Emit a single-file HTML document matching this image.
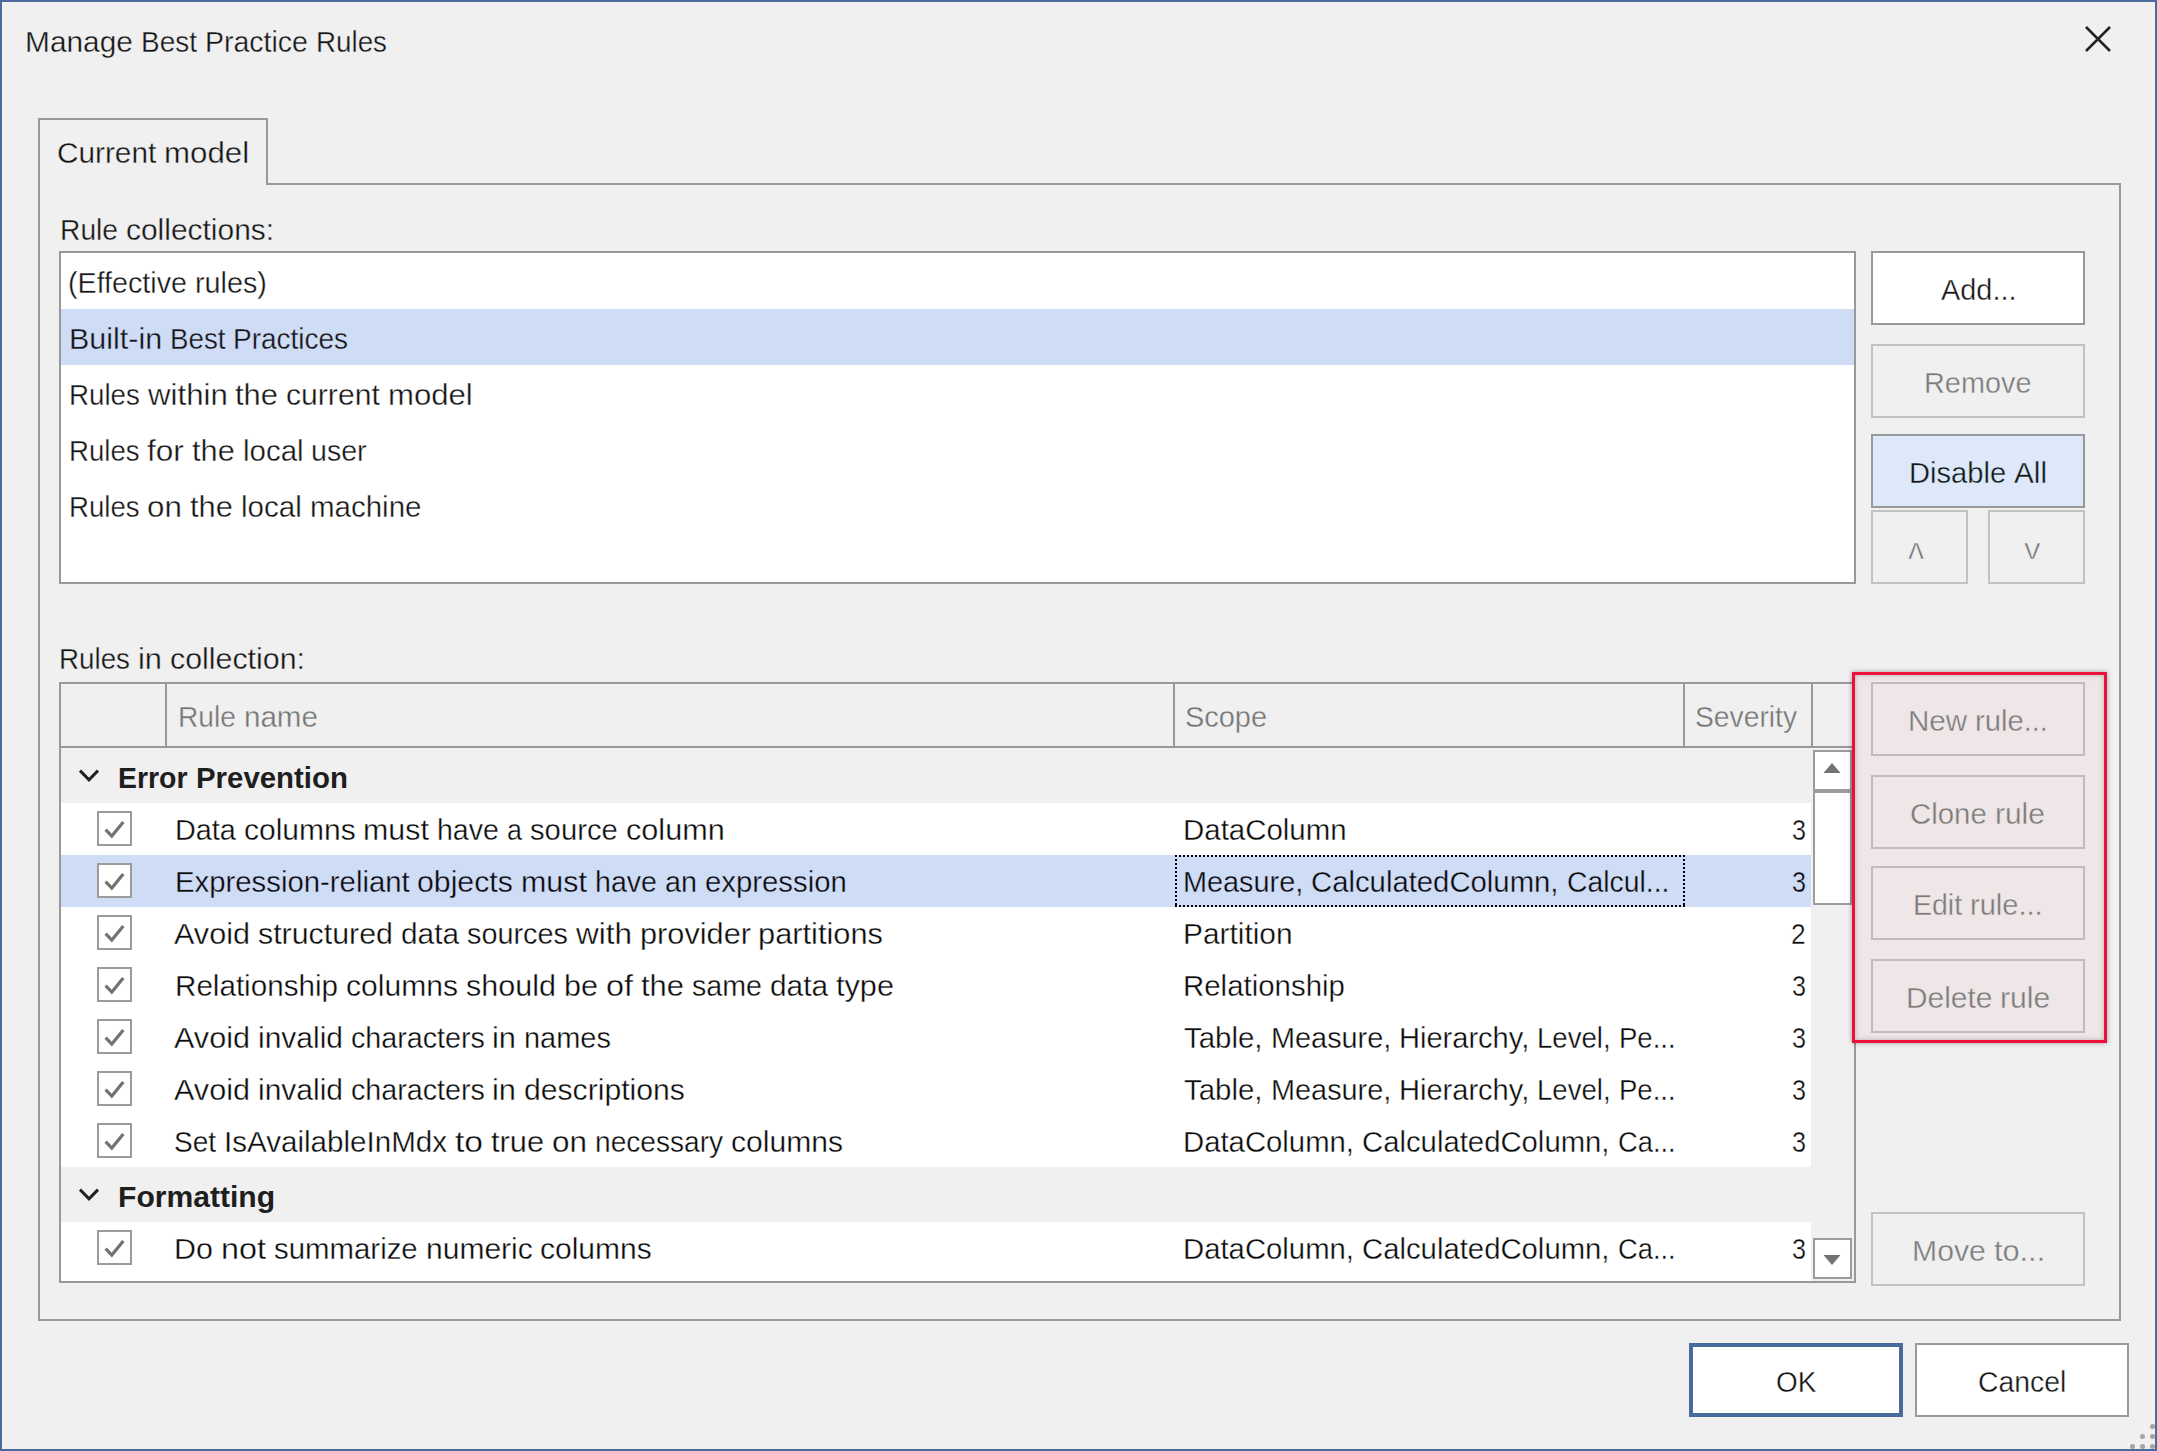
<!DOCTYPE html>
<html><head><meta charset="utf-8"><title>Manage Best Practice Rules</title>
<style>
html,body{margin:0;padding:0}
body{width:2157px;height:1451px;background:#f0f0f0;position:relative;overflow:hidden;font-family:"Liberation Sans",sans-serif;font-size:30px;line-height:36px}
.b{position:absolute;box-sizing:content-box}
.t{position:absolute;white-space:nowrap;height:36px}
.t span{position:absolute;top:0;transform-origin:0 0;white-space:pre}
.cb{width:31px;height:31px;border:2px solid #9b9b9b;background:#fff}
.cb svg{display:block}
#win{position:absolute;left:0;top:0;width:2153px;height:1447px;border:2px solid #4a6a9e;pointer-events:none}
</style></head>
<body>
<!-- tab control -->
<div class="b" style="left:38px;top:183px;width:2079px;height:1134px;border:2px solid #999"></div>
<div class="b" style="left:38px;top:118px;width:226px;height:65px;border:2px solid #999;border-bottom:none;background:#f0f0f0"></div>
<!-- rule collections listbox -->
<div class="b" style="left:59px;top:251px;width:1793px;height:329px;border:2px solid #999;background:#fff"></div>
<div class="b" style="left:61px;top:309px;width:1793px;height:56px;background:#cfdcf5"></div>
<!-- collection buttons -->
<div class="b" style="left:1871px;top:251px;width:210px;height:70px;border:2px solid #999;background:#fff"></div>
<div class="b" style="left:1871px;top:344px;width:210px;height:70px;border:2px solid #c2c2c2;background:#f0f0f0"></div>
<div class="b" style="left:1871px;top:434px;width:210px;height:70px;border:2px solid #999;background:#dde9fb"></div>
<div class="b" style="left:1871px;top:510px;width:93px;height:70px;border:2px solid #c2c2c2;background:#f0f0f0"></div>
<div class="b" style="left:1988px;top:510px;width:93px;height:70px;border:2px solid #c2c2c2;background:#f0f0f0"></div>
<!-- rules table -->
<div class="b" style="left:59px;top:682px;width:1793px;height:597px;border:2px solid #999;background:#f0f0f0"></div>
<div class="b" style="left:61px;top:746px;width:1793px;height:2px;background:#999"></div>
<div class="b" style="left:165px;top:684px;width:2px;height:62px;background:#999"></div>
<div class="b" style="left:1173px;top:684px;width:2px;height:62px;background:#999"></div>
<div class="b" style="left:1683px;top:684px;width:2px;height:62px;background:#999"></div>
<div class="b" style="left:1811px;top:684px;width:2px;height:62px;background:#999"></div>
<div class="b" style="left:61px;top:803px;width:1750px;height:52px;background:#fff"></div>
<div class="b" style="left:61px;top:855px;width:1750px;height:52px;background:#cfdcf5"></div>
<div class="b" style="left:61px;top:907px;width:1750px;height:52px;background:#fff"></div>
<div class="b" style="left:61px;top:959px;width:1750px;height:52px;background:#fff"></div>
<div class="b" style="left:61px;top:1011px;width:1750px;height:52px;background:#fff"></div>
<div class="b" style="left:61px;top:1063px;width:1750px;height:52px;background:#fff"></div>
<div class="b" style="left:61px;top:1115px;width:1750px;height:52px;background:#fff"></div>
<div class="b" style="left:61px;top:1222px;width:1750px;height:59px;background:#fff"></div>
<div class="b" style="left:1175px;top:855px;width:510px;height:2px;background:repeating-linear-gradient(90deg,#000 0 2px,transparent 2px 4px)"></div>
<div class="b" style="left:1175px;top:905px;width:510px;height:2px;background:repeating-linear-gradient(90deg,#000 0 2px,transparent 2px 4px)"></div>
<div class="b" style="left:1175px;top:855px;width:2px;height:52px;background:repeating-linear-gradient(180deg,#000 0 2px,transparent 2px 4px)"></div>
<div class="b" style="left:1683px;top:855px;width:2px;height:52px;background:repeating-linear-gradient(180deg,#000 0 2px,transparent 2px 4px)"></div>
<div class="b cb" style="left:97px;top:811px"><svg width="31" height="31" viewBox="0 0 31 31"><path d="M6.6 16.7 L12.8 23.1 L24.3 9.1" fill="none" stroke="#737373" stroke-width="3.2"/></svg></div>
<div class="b cb" style="left:97px;top:863px"><svg width="31" height="31" viewBox="0 0 31 31"><path d="M6.6 16.7 L12.8 23.1 L24.3 9.1" fill="none" stroke="#737373" stroke-width="3.2"/></svg></div>
<div class="b cb" style="left:97px;top:915px"><svg width="31" height="31" viewBox="0 0 31 31"><path d="M6.6 16.7 L12.8 23.1 L24.3 9.1" fill="none" stroke="#737373" stroke-width="3.2"/></svg></div>
<div class="b cb" style="left:97px;top:967px"><svg width="31" height="31" viewBox="0 0 31 31"><path d="M6.6 16.7 L12.8 23.1 L24.3 9.1" fill="none" stroke="#737373" stroke-width="3.2"/></svg></div>
<div class="b cb" style="left:97px;top:1019px"><svg width="31" height="31" viewBox="0 0 31 31"><path d="M6.6 16.7 L12.8 23.1 L24.3 9.1" fill="none" stroke="#737373" stroke-width="3.2"/></svg></div>
<div class="b cb" style="left:97px;top:1071px"><svg width="31" height="31" viewBox="0 0 31 31"><path d="M6.6 16.7 L12.8 23.1 L24.3 9.1" fill="none" stroke="#737373" stroke-width="3.2"/></svg></div>
<div class="b cb" style="left:97px;top:1123px"><svg width="31" height="31" viewBox="0 0 31 31"><path d="M6.6 16.7 L12.8 23.1 L24.3 9.1" fill="none" stroke="#737373" stroke-width="3.2"/></svg></div>
<div class="b cb" style="left:97px;top:1230px"><svg width="31" height="31" viewBox="0 0 31 31"><path d="M6.6 16.7 L12.8 23.1 L24.3 9.1" fill="none" stroke="#737373" stroke-width="3.2"/></svg></div>
<svg class="b" style="left:76px;top:766px" width="26" height="20" viewBox="0 0 26 20"><path d="M4 4.6 L13 13.8 L22 4.6" fill="none" stroke="#222" stroke-width="3"/></svg>
<svg class="b" style="left:76px;top:1185px" width="26" height="20" viewBox="0 0 26 20"><path d="M4 4.6 L13 13.8 L22 4.6" fill="none" stroke="#222" stroke-width="3"/></svg>
<!-- scrollbar -->
<div class="b" style="left:1813px;top:750px;width:35px;height:37px;border:2px solid #9c9c9c;background:#fff"></div>
<div class="b" style="left:1813px;top:791px;width:35px;height:110px;border:2px solid #9c9c9c;background:#fff"></div>
<div class="b" style="left:1813px;top:1238px;width:35px;height:37px;border:2px solid #9c9c9c;background:#fff"></div>
<svg class="b" style="left:1822px;top:762px" width="20" height="12" viewBox="0 0 20 12"><path d="M1.5 11 L10 1 L18.5 11 Z" fill="#737373"/></svg>
<svg class="b" style="left:1822px;top:1254px" width="20" height="12" viewBox="0 0 20 12"><path d="M1.5 1 L10 11 L18.5 1 Z" fill="#737373"/></svg>
<!-- highlighted rule buttons -->
<div class="b" style="left:1852px;top:672px;width:249px;height:365px;border:3px solid #ed0f3c;background:#efe6e7;box-shadow:0 0 5px rgba(0,0,0,.35), inset 0 0 5px rgba(60,90,80,.35)"></div>
<div class="b" style="left:1871px;top:682px;width:210px;height:70px;border:2px solid #c4b9bc;background:#efe6e7"></div>
<div class="b" style="left:1871px;top:775px;width:210px;height:70px;border:2px solid #c4b9bc;background:#efe6e7"></div>
<div class="b" style="left:1871px;top:866px;width:210px;height:70px;border:2px solid #c4b9bc;background:#efe6e7"></div>
<div class="b" style="left:1871px;top:959px;width:210px;height:70px;border:2px solid #c4b9bc;background:#efe6e7"></div>
<div class="b" style="left:1871px;top:1212px;width:210px;height:70px;border:2px solid #c2c2c2;background:#f0f0f0"></div>
<!-- dialog buttons -->
<div class="b" style="left:1689px;top:1343px;width:206px;height:66px;border:4px solid #4a6a9e;background:#fff"></div>
<div class="b" style="left:1915px;top:1343px;width:210px;height:70px;border:2px solid #999;background:#fff"></div>
<svg class="b" style="left:2083px;top:24px" width="30" height="30" viewBox="0 0 30 30"><path d="M3 3 L27 27 M27 3 L3 27" fill="none" stroke="#222" stroke-width="2.5"/></svg>
<div class="b" style="left:2150px;top:1424px;width:5px;height:5px;border-radius:50%;background:#a3a3a3"></div>
<div class="b" style="left:2140px;top:1434px;width:5px;height:5px;border-radius:50%;background:#a3a3a3"></div>
<div class="b" style="left:2150px;top:1434px;width:5px;height:5px;border-radius:50%;background:#a3a3a3"></div>
<div class="b" style="left:2130px;top:1444px;width:5px;height:5px;border-radius:50%;background:#a3a3a3"></div>
<div class="b" style="left:2140px;top:1444px;width:5px;height:5px;border-radius:50%;background:#a3a3a3"></div>
<div class="b" style="left:2150px;top:1444px;width:5px;height:5px;border-radius:50%;background:#a3a3a3"></div>
<div class="t" style="left:25.2px;top:24.0px;color:#151515;-webkit-text-stroke:0.35px #f0f0f0"><span style="left:0.0px;transform:scaleX(0.9956)">Manage</span> <span style="left:115.9px;transform:scaleX(0.9323)">Best</span> <span style="left:179.9px;transform:scaleX(0.9499)">Practice</span> <span style="left:290.8px;transform:scaleX(0.9252)">Rules</span></div>
<div class="t" style="left:57.1px;top:135.0px;color:#151515;-webkit-text-stroke:0.35px #f0f0f0"><span style="left:0.0px;transform:scaleX(0.9917)">Current</span> <span style="left:107.2px;transform:scaleX(1.0424)">model</span></div>
<div class="t" style="left:59.5px;top:212.0px;color:#151515;-webkit-text-stroke:0.35px #f0f0f0"><span style="left:0.0px;transform:scaleX(0.9407)">Rule</span> <span style="left:66.0px;transform:scaleX(0.9980)">collections:</span></div>
<div class="t" style="left:67.9px;top:265.0px;color:#151515;-webkit-text-stroke:0.35px #fff"><span style="left:0.0px;transform:scaleX(0.9552)">(Effective</span> <span style="left:126.9px;transform:scaleX(0.9592)">rules)</span></div>
<div class="t" style="left:68.9px;top:321.0px;color:#151515;-webkit-text-stroke:0.35px #cfdcf5"><span style="left:0.0px;transform:scaleX(1.0166)">Built-in</span> <span style="left:101.2px;transform:scaleX(0.9252)">Best</span> <span style="left:164.6px;transform:scaleX(0.9325)">Practices</span></div>
<div class="t" style="left:68.9px;top:377.0px;color:#151515;-webkit-text-stroke:0.35px #fff"><span style="left:0.0px;transform:scaleX(0.9234)">Rules</span> <span style="left:78.8px;transform:scaleX(1.0405)">within</span> <span style="left:166.6px;transform:scaleX(1.0285)">the</span> <span style="left:217.5px;transform:scaleX(1.0043)">current</span> <span style="left:319.2px;transform:scaleX(1.0377)">model</span></div>
<div class="t" style="left:68.9px;top:433.0px;color:#151515;-webkit-text-stroke:0.35px #fff"><span style="left:0.0px;transform:scaleX(0.9198)">Rules</span> <span style="left:78.5px;transform:scaleX(1.0501)">for</span> <span style="left:123.2px;transform:scaleX(1.0245)">the</span> <span style="left:173.9px;transform:scaleX(0.9824)">local</span> <span style="left:242.4px;transform:scaleX(0.9535)">user</span></div>
<div class="t" style="left:68.9px;top:489.0px;color:#151515;-webkit-text-stroke:0.35px #fff"><span style="left:0.0px;transform:scaleX(0.9213)">Rules</span> <span style="left:78.6px;transform:scaleX(1.0439)">on</span> <span style="left:121.4px;transform:scaleX(1.0262)">the</span> <span style="left:172.2px;transform:scaleX(0.9840)">local</span> <span style="left:240.9px;transform:scaleX(0.9830)">machine</span></div>
<div class="t" style="left:59.1px;top:641.0px;color:#151515;-webkit-text-stroke:0.35px #f0f0f0"><span style="left:0.0px;transform:scaleX(0.9255)">Rules</span> <span style="left:79.0px;transform:scaleX(1.0276)">in</span> <span style="left:111.0px;transform:scaleX(1.0118)">collection:</span></div>
<div class="t" style="left:1940.8px;top:272.0px;color:#151515;-webkit-text-stroke:0.35px #fff"><span style="left:0.0px;transform:scaleX(0.9635)">Add...</span></div>
<div class="t" style="left:1924.3px;top:365.0px;color:#7b7b7b;-webkit-text-stroke:0.35px #f0f0f0"><span style="left:0.0px;transform:scaleX(0.9616)">Remove</span></div>
<div class="t" style="left:1908.8px;top:455.0px;color:#151515;-webkit-text-stroke:0.35px #dde9fb"><span style="left:0.0px;transform:scaleX(0.9704)">Disable</span> <span style="left:105.1px;transform:scaleX(0.9907)">All</span></div>
<div class="t" style="left:1907.6px;top:531.4px;color:#777;-webkit-text-stroke:0.7px #f0f0f0"><span style="left:0.0px;transform:scaleX(1.0738)">ʌ</span></div>
<div class="t" style="left:2024.3px;top:531.4px;color:#777;-webkit-text-stroke:0.7px #f0f0f0"><span style="left:0.0px;transform:scaleX(1.1096)">v</span></div>
<div class="t" style="left:177.7px;top:699.0px;color:#757575;-webkit-text-stroke:0.35px #f0f0f0"><span style="left:0.0px;transform:scaleX(0.9390)">Rule</span> <span style="left:65.9px;transform:scaleX(0.9850)">name</span></div>
<div class="t" style="left:1184.5px;top:699.0px;color:#757575;-webkit-text-stroke:0.35px #f0f0f0"><span style="left:0.0px;transform:scaleX(0.9645)">Scope</span></div>
<div class="t" style="left:1694.5px;top:699.0px;color:#757575;-webkit-text-stroke:0.35px #f0f0f0"><span style="left:0.0px;transform:scaleX(0.9418)">Severity</span></div>
<div class="t" style="left:118.2px;top:760.0px;color:#1e1e1e;font-weight:bold"><span style="left:0.0px;transform:scaleX(0.9473)">Error</span> <span style="left:77.4px;transform:scaleX(0.9798)">Prevention</span></div>
<div class="t" style="left:118.2px;top:1179.0px;color:#1e1e1e;font-weight:bold"><span style="left:0.0px;transform:scaleX(1.0028)">Formatting</span></div>
<div class="t" style="left:174.8px;top:812.0px;color:#0a0a0a;-webkit-text-stroke:0.35px #fff"><span style="left:0.0px;transform:scaleX(0.9603)">Data</span> <span style="left:68.8px;transform:scaleX(1.0001)">columns</span> <span style="left:188.5px;transform:scaleX(1.0127)">must</span> <span style="left:262.4px;transform:scaleX(0.9507)">have</span> <span style="left:332.2px;transform:scaleX(0.8968)">a</span> <span style="left:355.1px;transform:scaleX(0.9749)">source</span> <span style="left:450.9px;transform:scaleX(1.0212)">column</span></div>
<div class="t" style="left:1183.2px;top:812.0px;color:#0a0a0a;-webkit-text-stroke:0.35px #fff"><span style="left:0.0px;transform:scaleX(0.9813)">DataColumn</span></div>
<div class="t" style="left:1791.6px;top:812.0px;color:#0a0a0a;-webkit-text-stroke:0.35px #fff"><span style="left:0.0px;transform:scaleX(0.8393)">3</span></div>
<div class="t" style="left:174.8px;top:864.0px;color:#0a0a0a;-webkit-text-stroke:0.35px #cfdcf5"><span style="left:0.0px;transform:scaleX(0.9774)">Expression-reliant</span> <span style="left:242.7px;transform:scaleX(1.0085)">objects</span> <span style="left:346.5px;transform:scaleX(1.0138)">must</span> <span style="left:420.4px;transform:scaleX(0.9517)">have</span> <span style="left:490.3px;transform:scaleX(0.9576)">an</span> <span style="left:530.3px;transform:scaleX(0.9774)">expression</span></div>
<div class="t" style="left:1183.2px;top:864.0px;color:#0a0a0a;-webkit-text-stroke:0.35px #cfdcf5"><span style="left:0.0px;transform:scaleX(0.9617)">Measure,</span> <span style="left:128.2px;transform:scaleX(0.9764)">CalculatedColumn,</span> <span style="left:383.6px;transform:scaleX(0.9447)">Calcul...</span></div>
<div class="t" style="left:1791.6px;top:864.0px;color:#0a0a0a;-webkit-text-stroke:0.35px #cfdcf5"><span style="left:0.0px;transform:scaleX(0.8393)">3</span></div>
<div class="t" style="left:173.7px;top:916.0px;color:#0a0a0a;-webkit-text-stroke:0.35px #fff"><span style="left:0.0px;transform:scaleX(1.0198)">Avoid</span> <span style="left:84.0px;transform:scaleX(1.0118)">structured</span> <span style="left:226.9px;transform:scaleX(0.9931)">data</span> <span style="left:292.9px;transform:scaleX(0.9612)">sources</span> <span style="left:401.9px;transform:scaleX(1.0494)">with</span> <span style="left:465.9px;transform:scaleX(1.0238)">provider</span> <span style="left:584.8px;transform:scaleX(1.0266)">partitions</span></div>
<div class="t" style="left:1183.2px;top:916.0px;color:#0a0a0a;-webkit-text-stroke:0.35px #fff"><span style="left:0.0px;transform:scaleX(0.9959)">Partition</span></div>
<div class="t" style="left:1791.2px;top:916.0px;color:#0a0a0a;-webkit-text-stroke:0.35px #fff"><span style="left:0.0px;transform:scaleX(0.8753)">2</span></div>
<div class="t" style="left:174.9px;top:968.0px;color:#0a0a0a;-webkit-text-stroke:0.35px #fff"><span style="left:0.0px;transform:scaleX(0.9869)">Relationship</span> <span style="left:170.9px;transform:scaleX(1.0022)">columns</span> <span style="left:290.9px;transform:scaleX(1.0177)">should</span> <span style="left:388.9px;transform:scaleX(1.0185)">be</span> <span style="left:430.8px;transform:scaleX(1.0788)">of</span> <span style="left:465.8px;transform:scaleX(1.0307)">the</span> <span style="left:516.8px;transform:scaleX(0.9539)">same</span> <span style="left:594.8px;transform:scaleX(0.9930)">data</span> <span style="left:660.8px;transform:scaleX(1.0225)">type</span></div>
<div class="t" style="left:1183.2px;top:968.0px;color:#0a0a0a;-webkit-text-stroke:0.35px #fff"><span style="left:0.0px;transform:scaleX(0.9809)">Relationship</span></div>
<div class="t" style="left:1791.6px;top:968.0px;color:#0a0a0a;-webkit-text-stroke:0.35px #fff"><span style="left:0.0px;transform:scaleX(0.8393)">3</span></div>
<div class="t" style="left:173.7px;top:1020.0px;color:#0a0a0a;-webkit-text-stroke:0.35px #fff"><span style="left:0.0px;transform:scaleX(1.0196)">Avoid</span> <span style="left:84.0px;transform:scaleX(0.9990)">invalid</span> <span style="left:176.9px;transform:scaleX(0.9563)">characters</span> <span style="left:318.8px;transform:scaleX(1.0274)">in</span> <span style="left:350.8px;transform:scaleX(0.9657)">names</span></div>
<div class="t" style="left:1184.2px;top:1020.0px;color:#0a0a0a;-webkit-text-stroke:0.35px #fff"><span style="left:0.0px;transform:scaleX(0.9809)">Table,</span> <span style="left:86.5px;transform:scaleX(0.9618)">Measure,</span> <span style="left:214.7px;transform:scaleX(0.9683)">Hierarchy,</span> <span style="left:352.9px;transform:scaleX(0.9188)">Level,</span> <span style="left:434.4px;transform:scaleX(0.9183)">Pe...</span></div>
<div class="t" style="left:1791.6px;top:1020.0px;color:#0a0a0a;-webkit-text-stroke:0.35px #fff"><span style="left:0.0px;transform:scaleX(0.8393)">3</span></div>
<div class="t" style="left:173.7px;top:1072.0px;color:#0a0a0a;-webkit-text-stroke:0.35px #fff"><span style="left:0.0px;transform:scaleX(1.0195)">Avoid</span> <span style="left:83.9px;transform:scaleX(0.9988)">invalid</span> <span style="left:176.9px;transform:scaleX(0.9562)">characters</span> <span style="left:318.8px;transform:scaleX(1.0272)">in</span> <span style="left:350.8px;transform:scaleX(1.0052)">descriptions</span></div>
<div class="t" style="left:1184.2px;top:1072.0px;color:#0a0a0a;-webkit-text-stroke:0.35px #fff"><span style="left:0.0px;transform:scaleX(0.9809)">Table,</span> <span style="left:86.5px;transform:scaleX(0.9618)">Measure,</span> <span style="left:214.7px;transform:scaleX(0.9683)">Hierarchy,</span> <span style="left:352.9px;transform:scaleX(0.9188)">Level,</span> <span style="left:434.4px;transform:scaleX(0.9183)">Pe...</span></div>
<div class="t" style="left:1791.6px;top:1072.0px;color:#0a0a0a;-webkit-text-stroke:0.35px #fff"><span style="left:0.0px;transform:scaleX(0.8393)">3</span></div>
<div class="t" style="left:173.8px;top:1124.0px;color:#0a0a0a;-webkit-text-stroke:0.35px #fff"><span style="left:0.0px;transform:scaleX(0.9331)">Set</span> <span style="left:50.0px;transform:scaleX(0.9862)">IsAvailableInMdx</span> <span style="left:281.1px;transform:scaleX(1.1196)">to</span> <span style="left:317.1px;transform:scaleX(1.0257)">true</span> <span style="left:378.2px;transform:scaleX(1.0493)">on</span> <span style="left:421.2px;transform:scaleX(0.9366)">necessary</span> <span style="left:557.2px;transform:scaleX(1.0031)">columns</span></div>
<div class="t" style="left:1183.2px;top:1124.0px;color:#0a0a0a;-webkit-text-stroke:0.35px #fff"><span style="left:0.0px;transform:scaleX(0.9765)">DataColumn,</span> <span style="left:178.9px;transform:scaleX(0.9765)">CalculatedColumn,</span> <span style="left:434.4px;transform:scaleX(0.9100)">Ca...</span></div>
<div class="t" style="left:1791.6px;top:1124.0px;color:#0a0a0a;-webkit-text-stroke:0.35px #fff"><span style="left:0.0px;transform:scaleX(0.8393)">3</span></div>
<div class="t" style="left:174.3px;top:1231.0px;color:#0a0a0a;-webkit-text-stroke:0.35px #fff"><span style="left:0.0px;transform:scaleX(1.0148)">Do</span> <span style="left:46.9px;transform:scaleX(1.0767)">not</span> <span style="left:99.8px;transform:scaleX(0.9796)">summarize</span> <span style="left:251.5px;transform:scaleX(1.0007)">numeric</span> <span style="left:366.2px;transform:scaleX(1.0005)">columns</span></div>
<div class="t" style="left:1183.2px;top:1231.0px;color:#0a0a0a;-webkit-text-stroke:0.35px #fff"><span style="left:0.0px;transform:scaleX(0.9765)">DataColumn,</span> <span style="left:178.9px;transform:scaleX(0.9765)">CalculatedColumn,</span> <span style="left:434.4px;transform:scaleX(0.9100)">Ca...</span></div>
<div class="t" style="left:1791.6px;top:1231.0px;color:#0a0a0a;-webkit-text-stroke:0.35px #fff"><span style="left:0.0px;transform:scaleX(0.8393)">3</span></div>
<div class="t" style="left:1907.6px;top:703.0px;color:#7b7b7b;-webkit-text-stroke:0.35px #efe6e7"><span style="left:0.0px;transform:scaleX(0.9855)">New</span> <span style="left:67.0px;transform:scaleX(0.9722)">rule...</span></div>
<div class="t" style="left:1910.0px;top:796.0px;color:#7b7b7b;-webkit-text-stroke:0.35px #efe6e7"><span style="left:0.0px;transform:scaleX(0.9802)">Clone</span> <span style="left:84.8px;transform:scaleX(0.9973)">rule</span></div>
<div class="t" style="left:1912.8px;top:887.0px;color:#7b7b7b;-webkit-text-stroke:0.35px #efe6e7"><span style="left:0.0px;transform:scaleX(0.9501)">Edit</span> <span style="left:57.0px;transform:scaleX(0.9688)">rule...</span></div>
<div class="t" style="left:1905.5px;top:980.0px;color:#7b7b7b;-webkit-text-stroke:0.35px #efe6e7"><span style="left:0.0px;transform:scaleX(0.9949)">Delete</span> <span style="left:94.3px;transform:scaleX(1.0027)">rule</span></div>
<div class="t" style="left:1912.0px;top:1233.0px;color:#7b7b7b;-webkit-text-stroke:0.35px #f0f0f0"><span style="left:0.0px;transform:scaleX(1.0062)">Move</span> <span style="left:81.7px;transform:scaleX(1.0231)">to...</span></div>
<div class="t" style="left:1776.4px;top:1364.0px;color:#151515;-webkit-text-stroke:0.35px #fff"><span style="left:0.0px;transform:scaleX(0.9303)">OK</span></div>
<div class="t" style="left:1978.3px;top:1364.0px;color:#151515;-webkit-text-stroke:0.35px #fff"><span style="left:0.0px;transform:scaleX(0.9444)">Cancel</span></div>
<div id="win"></div>
</body></html>
